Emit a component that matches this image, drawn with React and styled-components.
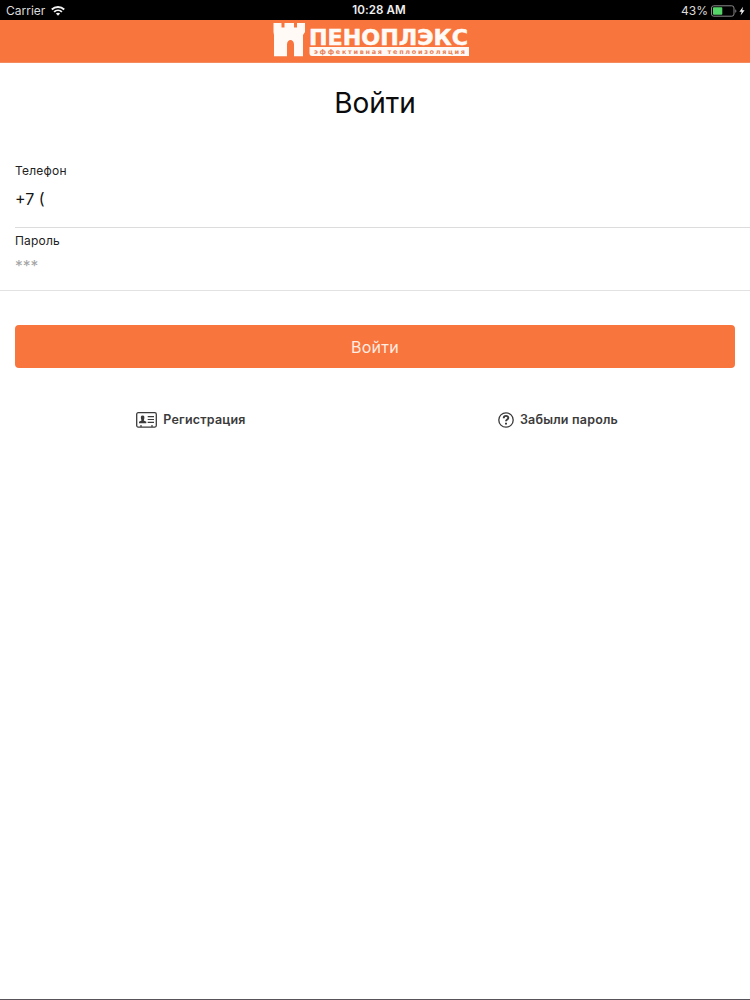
import React from 'react';
import styled, { createGlobalStyle } from 'styled-components';

const GlobalStyle = createGlobalStyle`
  *, *::before, *::after { box-sizing: border-box; }
  body { margin: 0; background: #fff; }
`;

const Screen = styled.div`
  display: flex;
  flex-direction: column;
  height: 1000px;
  font-family: Inter, 'Liberation Sans', sans-serif;
  color: #151515;
  background: #fff;
  border-bottom: 1px solid #58535a;
  overflow: hidden;
`;

const StatusBar = styled.div`
  flex: none;
  display: grid;
  grid-template-columns: 1fr auto 1fr;
  align-items: center;
  height: 20px;
  padding: 1px 4px 0 6px;
  background: #000;
  color: #dcdcdc;
  font-size: 12px;
  line-height: 19px;
`;

const StatusGroup = styled.div`
  display: flex;
  align-items: center;
  justify-content: ${(p) => (p.$end ? 'flex-end' : 'flex-start')};
  gap: ${(p) => (p.$end ? '3px' : '6px')};
  svg { display: block; }
`;

const Clock = styled.div`
  font-size: 11.6px;
  font-weight: 600;
  color: #eee;
  letter-spacing: 0.1px;
  padding-left: 6px;
`;

const Header = styled.header`
  flex: none;
  display: flex;
  justify-content: center;
  height: 43px;
  padding: 2px 8px 0 0;
  background: #f9753e;
  border-bottom: 1px solid #f48a5e;
`;

const Title = styled.h1`
  margin: 21px 0 0;
  text-align: center;
  font-size: 28px;
  line-height: 38px;
  font-weight: 400;
  letter-spacing: ${(p) => p.$tracking};
  color: #0b0b0b;
`;

const Form = styled.form`
  display: flex;
  flex-direction: column;
  margin-top: 40px;
  border-bottom: 1px solid #e3e2e3;
`;

const Field = styled.label`
  display: flex;
  flex-direction: column;
  height: ${(p) => p.$height};
  margin-left: 15px;
  padding-top: ${(p) => p.$top};
  border-bottom: ${(p) => (p.$divided ? '1px solid #dedbdc' : 'none')};
`;

const Label = styled.span`
  font-size: 12px;
  line-height: 16px;
  letter-spacing: ${(p) => p.$tracking};
  color: #222;
`;

const Value = styled.span`
  margin-top: ${(p) => p.$gap};
  font-size: ${(p) => (p.$muted ? '15.5px' : '16px')};
  line-height: 20px;
  color: ${(p) => (p.$muted ? '#a5a5a5' : '#151515')};
`;

const Submit = styled.button`
  flex: none;
  height: 43px;
  margin: 34px 15px 0;
  padding: 0;
  border: 0;
  border-radius: 4px;
  background: #f9753e;
  color: #ffece2;
  font-family: inherit;
  font-size: 16px;
  letter-spacing: 0.3px;
`;

const Links = styled.nav`
  display: grid;
  grid-template-columns: 382px 1fr;
  margin-top: 41px;
`;

const LinkItem = styled.a`
  display: flex;
  align-items: center;
  justify-content: center;
  gap: 6px;
  height: 20px;
  padding-right: ${(p) => p.$shift};
  color: #3b3b3b;
  font-size: 12.5px;
  font-weight: 600;
  letter-spacing: ${(p) => p.$tracking};
  svg { display: block; margin-top: 2px; }
`;

const Wifi = () => (
  <svg width="14" height="10" viewBox="0 0 14 10" fill="none" stroke="#f4f4f4" strokeWidth="1.9">
    <path d="M.8 3.5C4.2.2 9.800.2 13.200 3.500M3.100 5.900c2.200-2 5.600-2 7.800 0" />
    <path d="M4.900 7.500c1.200-1 3-1 4.200 0L7 9.800z" fill="#f4f4f4" stroke="none" />
  </svg>
);

const Battery = () => (
  <svg width="35" height="12" viewBox="0 0 35 12">
    <rect x=".5" y=".8" width="22.500" height="10.400" rx="2.200" fill="none" stroke="#8a8a8a" />
    <rect x="2" y="2.300" width="9.300" height="7.400" rx=".8" fill="#55d568" />
    <path d="M24.300 4.200c1.400.5 1.400 3.100 0 3.600z" fill="#8a8a8a" />
    <path d="M32 1.800 28.400 6.700h2.200L29.600 10.500 33.600 5.300h-2.300z" fill="#f4f4f4" />
  </svg>
);

const Logo = () => (
  <svg width="197" height="36" viewBox="273 22 197 36" fill="#fffaf5">
    <path d="M273.500 23h8v4.500h3V23h9.500v4.500h3V23h8v9l-2 3v21.300h-9V44.500c0-6-7-6-7 0v11.800h-13V35l-.5-3z" />
    <text x="309" y="45" fontFamily="'DejaVu Sans', sans-serif" fontWeight="700" fontSize="21.500" textLength="159" lengthAdjust="spacingAndGlyphs" stroke="#fffaf5" strokeWidth=".5">ПЕНОПЛЭКС</text>
    <path d="M309.500 47H469v9H312q-2.500 0-2.500-3z" />
    <text x="314" y="53.800" fill="#e98259" fontFamily="'DejaVu Sans', sans-serif" fontWeight="700" fontSize="6.500" textLength="151">эффективная теплоизоляция</text>
  </svg>
);

const CardIcon = () => (
  <svg width="21" height="16" viewBox="0 0 21 16" fill="none" stroke="#3b3b3b" strokeWidth="1.300">
    <rect x=".7" y=".7" width="19.600" height="14.400" rx="1.500" />
    <path d="M11.700 4.700h6.300M11.700 7.500h6.300M11.700 10.300h6.300M5 13v2M16 13v2" strokeWidth="1.200" />
    <path d="M3 11.200V9.700L5.500 8.400Q3.700 3.500 6.600 3.500T7.800 8.400L10.300 9.700V11.200z" fill="#3b3b3b" stroke="none" />
  </svg>
);

const HelpIcon = () => (
  <svg width="16" height="16" viewBox="0 0 16 16" fill="none" stroke="#3b3b3b">
    <circle cx="8" cy="8" r="7.200" strokeWidth="1.300" />
    <path d="M5.700 6.200C5.800 3 10.500 3.300 10.300 6 10.200 7.500 8 7.600 8 9.300" strokeWidth="1.900" />
    <path d="M8 10.700v1.900" strokeWidth="2" />
  </svg>
);

export default function App() {
  return (
    <>
      <GlobalStyle />
      <Screen>
        <StatusBar>
          <StatusGroup><span>Carrier</span><Wifi /></StatusGroup>
          <Clock>10:28 AM</Clock>
          <StatusGroup $end><span>43%</span><Battery /></StatusGroup>
        </StatusBar>
        <Header><Logo /></Header>
        <Title $tracking="0px">Войти</Title>
        <Form>
          <Field $height="66px" $top="1px" $divided>
            <Label $tracking="0.2px">Телефон</Label>
            <Value $gap="10px">+7 (</Value>
          </Field>
          <Field $height="62px" $top="5px">
            <Label $tracking="0.2px">Пароль</Label>
            <Value $gap="8px" $muted>***</Value>
          </Field>
        </Form>
        <Submit type="button">Войти</Submit>
        <Links>
          <LinkItem $shift="0px" $tracking="0.2px"><CardIcon />Регистрация</LinkItem>
          <LinkItem $shift="16px" $tracking="0.2px"><HelpIcon />Забыли пароль</LinkItem>
        </Links>
      </Screen>
    </>
  );
}
